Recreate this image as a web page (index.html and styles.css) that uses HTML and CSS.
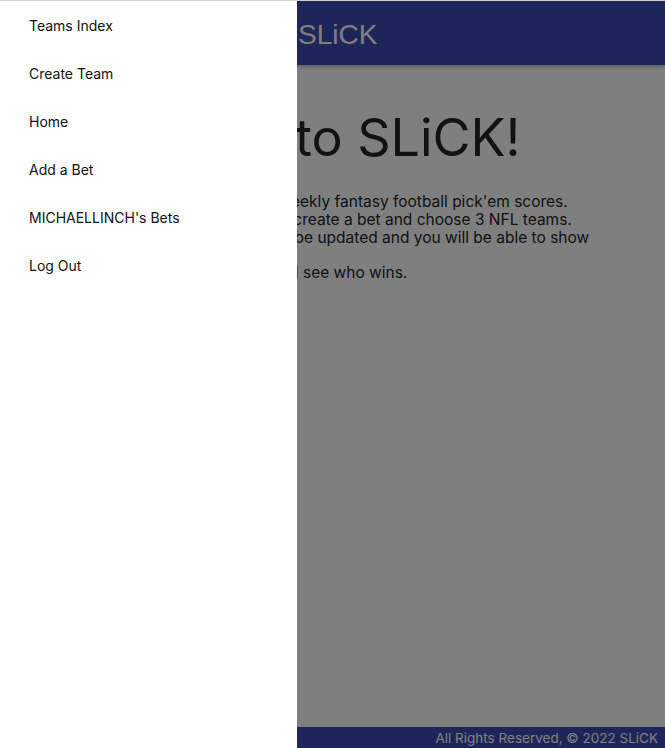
FILE: index.html
```html
<!DOCTYPE html>
<html lang="en">
<head>
<meta charset="utf-8">
<title>SLiCK</title>
<link rel="stylesheet" href="styles.css">
</head>
<body>
<div class="page">
  <header class="topbar">
    <button class="menu-btn" aria-label="menu">
      <svg width="24" height="24" viewBox="0 0 24 24"><path d="M3 18h18v-2H3v2zm0-5h18v-2H3v2zm0-7v2h18V6H3z" fill="#fff"/></svg>
    </button>
    <span class="brand">SLiCK</span>
  </header>
  <main class="content">
    <h1 class="title">Welcome to SLiCK!</h1>
    <p class="intro">SLiCK is a website to track the weekly fantasy football pick'em scores.<br>Log in, then all you need to do is create a bet and choose 3 NFL teams.<br>Each week all of your scores will be updated and you will be able to show<br>off to all your friends.<br>Then check back every week and see who wins.</p>
  </main>
  <footer class="footer">All Rights Reserved, © 2022 SLiCK</footer>
</div>
<div class="backdrop"></div>
<nav class="drawer">
  <ul class="nav-list">
    <li><a class="nav-item" href="#">Teams Index</a></li>
    <li><a class="nav-item" href="#">Create Team</a></li>
    <li><a class="nav-item" href="#">Home</a></li>
    <li><a class="nav-item" href="#">Add a Bet</a></li>
    <li><a class="nav-item" href="#">MICHAELLINCH's Bets</a></li>
    <li><a class="nav-item" href="#">Log Out</a></li>
  </ul>
</nav>
<div class="frame-line"></div>
</body>
</html>
```
FILE: styles.css
```css
* { box-sizing: border-box; }
html, body { margin: 0; padding: 0; height: 100%; }
body {
  font-family: Inter, "Noto Sans", sans-serif;
  color: #212529;
  background: #fff;
  overflow: hidden;
}
.page {
  min-height: 100vh;
  display: flex;
  flex-direction: column;
}
.topbar {
  height: 64px;
  background: #3d4ab3;
  display: flex;
  align-items: center;
  padding-left: 252px;
  padding-top: 3px;
  box-shadow: 0 2px 4px rgba(0,0,0,0.25);
  margin-top: 1px;
}
.menu-btn {
  background: none;
  border: 0;
  width: 40px;
  height: 40px;
  padding: 8px;
  margin-right: 6px;
}
.brand {
  font-family: "Liberation Sans", Arial, sans-serif;
  font-size: 28px;
  color: #fff;
}
.content {
  flex: 1;
  padding-left: 52px;
}
.title {
  font-size: 52px;
  font-weight: 400;
  margin: 42px 0 24px;
  line-height: 1.2;
}
.intro {
  font-size: 15.5px;
  line-height: 17.6px;
  margin: 0;
}
.footer {
  height: 21px;
  background: #3d4ab3;
  color: #fff;
  font-size: 13.5px;
  text-align: right;
  padding-right: 7px;
  line-height: 22px;
}
.backdrop {
  position: fixed;
  inset: 0;
  background: rgba(0,0,0,0.5);
}
.drawer {
  position: fixed;
  top: 0;
  left: 0;
  bottom: 0;
  width: 297px;
  background: #fff;
}
.nav-list {
  list-style: none;
  margin: 0;
  padding: 2px 0 0;
}
.nav-item {
  display: block;
  height: 48px;
  line-height: 48px;
  padding-left: 29px;
  font-size: 14px;
  color: #111;
  text-decoration: none;
}
.frame-line {
  position: fixed;
  top: 0;
  left: 0;
  right: 0;
  height: 1px;
  background: #d0d0d0;
}
```
